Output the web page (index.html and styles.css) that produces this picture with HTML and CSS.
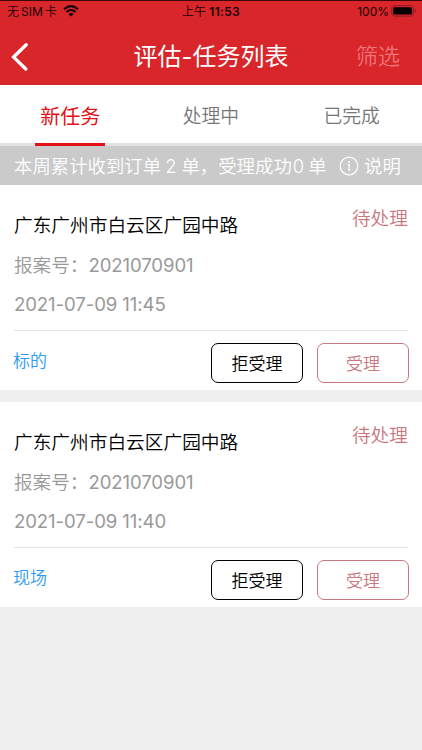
FILE: index.html
```html
<!DOCTYPE html>
<html lang="zh-CN">
<head>
<meta charset="utf-8">
<title>评估-任务列表</title>
<link rel="stylesheet" href="styles.css">
</head>
<body>
<header class="header">
  <div class="status">
    <div class="carrier"><span>无<span class="sim">SIM</span>卡</span>
      <svg width="16" height="12" viewBox="0 0 16 12"><path d="M1 4.2Q8-1.9 15 4.2M3.4 6.9Q8 3 12.6 6.9" fill="none" stroke="#180204" stroke-width="2"/><path d="M5.3 8.9Q8 6.9 10.7 8.9L8 11.6Z" fill="#180204"/></svg>
    </div>
    <div class="clock">上午 <b>11:53</b></div>
    <div class="battery"><span>100%</span>
      <svg width="26" height="12" viewBox="0 0 26 12"><rect x=".7" y=".7" width="21.6" height="10.4" rx="2.8" fill="none" stroke="#8b1b20"/><rect x="2.2" y="2.2" width="18.6" height="7.4" rx="1.3" fill="#050000"/><path d="M23.8 4.2q1.3.3 1.3 1.7t-1.3 1.7z" fill="#8b1b20"/></svg>
    </div>
  </div>
  <nav class="navbar">
    <svg class="back" width="18" height="30" viewBox="0 0 18 30"><path d="M15.2 2.8L2.6 15.1L14.8 27" fill="none" stroke="#fff" stroke-width="3.4" stroke-linecap="round" stroke-linejoin="miter"/></svg>
    <h1 class="title">评估-任务列表</h1>
    <span class="filter">筛选</span>
  </nav>
</header>
<div class="tabs">
  <div class="tab active"><span>新任务</span></div>
  <div class="tab"><span>处理中</span></div>
  <div class="tab"><span>已完成</span></div>
</div>
<div class="notice">
  <span class="summary">本周累计收到订单<span class="count">2</span>单，受理成功<span class="count zero">0</span>单</span>
  <svg class="info" width="20" height="20" viewBox="0 0 20 20"><circle cx="10" cy="10" r="8.8" fill="none" stroke="#fff" stroke-width="1.2"/><circle cx="10" cy="6" r="1" fill="#fff"/><path d="M9 8.6H10.2V14M9 14.1H11.4" fill="none" stroke="#fff" stroke-width="1.1"/></svg>
  <span>说明</span>
</div>
<main class="list">
  <article class="card">
    <div class="details">
      <h2 class="address">广东广州市白云区广园中路</h2>
      <span class="state">待处理</span>
      <p class="case">报案号：<span class="number">2021070901</span></p>
      <p class="time">2021-07-09 11:45</p>
    </div>
    <footer class="actions"><span class="kind">标的</span><button class="btn">拒受理</button><button class="btn accept">受理</button></footer>
  </article>
  <article class="card">
    <div class="details">
      <h2 class="address">广东广州市白云区广园中路</h2>
      <span class="state">待处理</span>
      <p class="case">报案号：<span class="number">2021070901</span></p>
      <p class="time">2021-07-09 11:40</p>
    </div>
    <footer class="actions"><span class="kind">现场</span><button class="btn">拒受理</button><button class="btn accept">受理</button></footer>
  </article>
</main>
</body>
</html>
```
FILE: styles.css
```css
* { box-sizing: border-box; margin: 0; padding: 0; }
body { width: 422px; min-height: 750px; background: #f0f0f0; font-family: Inter, "Noto Sans CJK SC", sans-serif; font-weight: 350; color: #000; overflow: hidden; white-space: nowrap; }
svg { display: block; flex: none; }

.header { height: 85px; background: #d8262b; border-top: 1px solid #3c080a; }
.status { display: grid; grid-template-columns: 1fr auto 1fr; height: 20px; line-height: 21px; font-size: 12px; color: #180204; }
.carrier { display: flex; align-items: center; gap: 6px; padding-left: 7px; }
.carrier svg, .battery svg { margin-bottom: 1px; }
.sim { margin: 0 2px; font-weight: 400; }
.clock b { font-weight: 600; letter-spacing: .3px; }
.battery { display: flex; align-items: center; justify-content: flex-end; gap: 2px; padding-right: 5px; font-weight: 400; }
.navbar { display: grid; grid-template-columns: 120px 1fr 120px; align-items: center; height: 64px; padding-top: 7px; }
.back { margin-left: 11px; }
.title { color: #fff; font-size: 24px; font-weight: 400; line-height: 37px; text-align: center; }
.filter { color: #ee7377; font-size: 22px; line-height: 37px; text-align: right; padding-right: 22px; }

.tabs { display: grid; grid-template-columns: repeat(3, 1fr); height: 61px; background: #fff; border-bottom: 3px solid #e3e3e3; }
.tab { display: flex; justify-content: center; height: 61px; color: #777; font-size: 18.8px; line-height: 64px; }
.active { color: #e31017; font-size: 20px; font-weight: 400; }
.active span { width: 70px; height: 61px; text-align: center; border-bottom: 3px solid #e31017; }

.notice { display: flex; align-items: center; height: 39px; padding-left: 14px; background: #cacaca; color: #fff; font-size: 18.4px; line-height: 40px; }
.summary { width: 325px; }
.count { margin: 0 5px 0 4px; }
.zero { margin: 0 4px 0 1px; }
.info { margin-right: 5px; }

.list { display: grid; gap: 12px; }
.card { height: 205px; background: #fff; padding: 0 14px; }
.details { display: grid; grid-template-columns: 1fr auto; grid-template-rows: 60px 39px 46px; height: 146px; border-bottom: 1px solid #e2e2e2; }
.address { font-size: 18.7px; font-weight: 350; line-height: 30px; padding-top: 26px; }
.state { color: #c97880; font-size: 18.7px; line-height: 30px; padding-top: 19px; }
.case, .time { grid-column: 1 / -1; color: #999; font-size: 18.6px; line-height: 40px; }
.number, .time { font-weight: 400; letter-spacing: -.1px; }
.actions { display: flex; gap: 14px; margin: 0 -1px; padding-top: 12px; }
.kind { flex: 1; color: #2d9bf0; font-size: 17px; line-height: 36px; }
.btn { width: 92px; height: 40px; padding-top: 2px; border: 1.4px solid #000; border-radius: 7px; background: #fff; color: #000; font: 350 17px/36px Inter, "Noto Sans CJK SC", sans-serif; }
.accept { color: #c97880; border-color: #c97880; }
```
